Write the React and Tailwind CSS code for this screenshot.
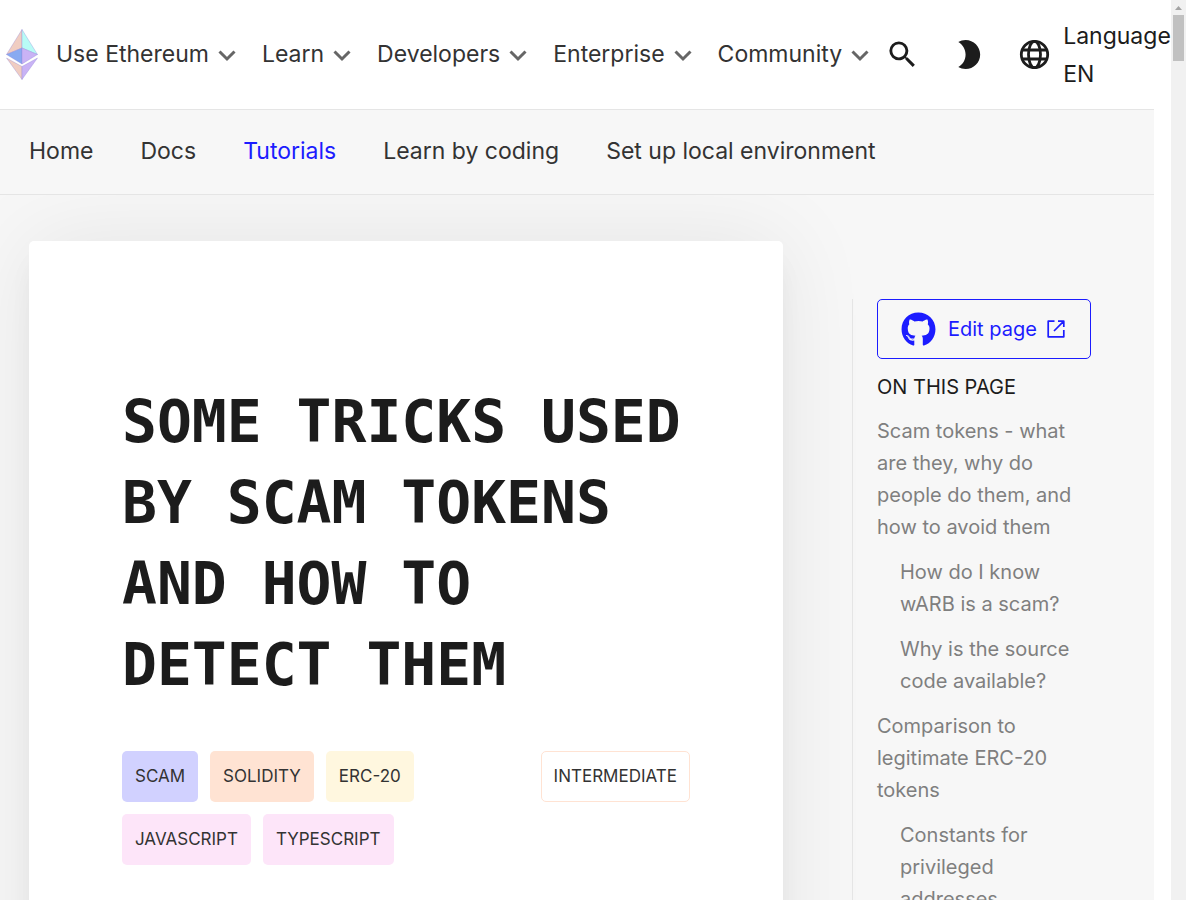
import React from "react";
import { MdSearch, MdBrightness2 } from "react-icons/md";
import { FaGithub } from "react-icons/fa";

const menus = ["Use Ethereum", "Learn", "Developers", "Enterprise", "Community"];

const sections = ["Home", "Docs", "Tutorials", "Learn by coding", "Set up local environment"];

const tags = [
  { name: "SCAM", color: "bg-[#d1d1ff]" },
  { name: "SOLIDITY", color: "bg-[#ffe3d3]" },
  { name: "ERC-20", color: "bg-[#fff7df]" },
  { name: "JAVASCRIPT", color: "bg-[#fde5f9]" },
  { name: "TYPESCRIPT", color: "bg-[#fde5f9]" },
];

const contents = [
  { title: "Scam tokens - what are they, why do people do them, and how to avoid them" },
  { title: "How do I know wARB is a scam?", nested: true },
  { title: "Why is the source code available?", nested: true },
  { title: "Comparison to legitimate ERC-20 tokens" },
  { title: "Constants for privileged addresses", nested: true },
];

function EthLogo() {
  return (
    <svg viewBox="0 0 32 52" className="h-[52px] w-8" aria-hidden="true">
      <g stroke="#8c7ed6" strokeOpacity="0.4" strokeWidth="0.8" strokeLinejoin="round">
        <path d="M16 0.5 0.5 25.5 16 19Z" fill="#f0cdc2" />
        <path d="M16 0.5 31.5 25.5 16 19Z" fill="#b8fbf6" />
        <path d="M0.5 25.5 16 19V35Z" fill="#88aaf1" />
        <path d="M31.5 25.5 16 19V35Z" fill="#c9b3f5" />
        <path d="M0.5 29 16 37.5V50.5Z" fill="#f0cdc2" />
        <path d="M31.5 29 16 37.5V50.5Z" fill="#c9b3f5" />
      </g>
    </svg>
  );
}

function Chevron() {
  return (
    <svg viewBox="0 0 34 34" className="ml-px h-[34px] w-[34px] text-[#666666]" fill="none" stroke="currentColor" strokeWidth="3" aria-hidden="true">
      <path d="M9.5 13.5 17 21 24.5 13.5" />
    </svg>
  );
}

function Globe() {
  return (
    <svg viewBox="0 0 35 35" className="h-[35px] w-[35px] shrink-0" fill="none" stroke="currentColor" strokeWidth="2.8" aria-hidden="true">
      <circle cx="17.5" cy="17.5" r="13.2" />
      <ellipse cx="17.5" cy="17.5" rx="6" ry="13.2" />
      <path d="M5.5 13h24M5.5 22h24" />
    </svg>
  );
}

function ExternalIcon() {
  return (
    <svg viewBox="0 0 18 18" className="h-[18px] w-[18px]" fill="none" stroke="currentColor" strokeWidth="1.7" strokeLinejoin="round" aria-hidden="true">
      <path d="M7.5 1.2H1.2v15.6h15.6V10M11 1.2h5.8V7M16.8 1.2 7 11" />
    </svg>
  );
}

function Header() {
  return (
    <header className="flex h-[109px] items-center bg-white pl-[6px] text-[#1c1c1c]">
      <a href="#home" aria-label="Ethereum home" className="shrink-0">
        <EthLogo />
      </a>
      <nav aria-label="Main" className="ml-[18px] flex items-center gap-[18px]">
        {menus.map((menu) => (
          <button key={menu} type="button" className="flex items-center whitespace-nowrap text-[#333333]">
            {menu}
            <Chevron />
          </button>
        ))}
      </nav>
      <button type="button" aria-label="Search" className="ml-2 shrink-0">
        <MdSearch className="h-[35px] w-[35px]" />
      </button>
      <button type="button" aria-label="Switch theme" className="ml-[31px] shrink-0">
        <MdBrightness2 className="h-[35px] w-[35px]" />
      </button>
      <button type="button" className="ml-[31px] flex shrink-0 items-center gap-[11px] text-left leading-[38px]">
        <Globe />
        <span className="w-[108px]">Language EN</span>
      </button>
    </header>
  );
}

export default function App() {
  return (
    <div className="flex h-screen overflow-hidden bg-white font-['Inter',sans-serif] text-[23px]">
      <div className="min-w-0 flex-1">
        <Header />
        <div className="mr-[17px] bg-[#f7f7f7]">
          <nav
            aria-label="Developers"
            className="flex h-[86px] items-center gap-[47px] border-y border-[#e5e5e5] pb-px pl-[29px]"
          >
            {sections.map((name) => (
              <a
                key={name}
                href="#section"
                className={name === "Tutorials" ? "whitespace-nowrap text-[#1c1cff]" : "whitespace-nowrap text-[#333333]"}
              >
                {name}
              </a>
            ))}
          </nav>
          <div className="flex overflow-hidden pl-[29px] pt-[46px]">
            <main className="min-h-[900px] min-w-0 flex-1 rounded-[5px] bg-white px-[93px] pt-[141px] shadow-[0_20px_25px_-5px_rgba(0,0,0,0.06),0_0_90px_rgba(0,0,0,0.08)]">
              <h1 className="font-['DejaVu_Sans_Mono',monospace] text-[58px] font-bold leading-[81px] text-[#1c1c1c]">
                SOME TRICKS USED BY SCAM TOKENS AND HOW TO DETECT THEM
              </h1>
              <div className="mt-[45px] flex items-start justify-between text-[17px] leading-[27px] text-[#333333]">
                <div className="flex w-[310px] flex-wrap gap-3">
                  {tags.map((tag) => (
                    <span key={tag.name} className={`rounded-[5px] px-[13px] py-3 ${tag.color}`}>
                      {tag.name}
                    </span>
                  ))}
                </div>
                <span className="rounded-[5px] border border-[#ffe3d3] px-3 py-[11px]">INTERMEDIATE</span>
              </div>
            </main>
            <aside className="ml-[69px] mt-[58px] w-[239px] shrink-0 border-l border-[#e5e5e5] pl-6 text-[20px] leading-8">
              <a
                href="#edit"
                className="flex h-[60px] items-center rounded-[5px] border border-[#1c1cff] pl-[23px] text-[#1c1cff]"
              >
                <FaGithub className="mr-3 h-[35px] w-[35px]" />
                Edit page
                <span className="ml-[10px]">
                  <ExternalIcon />
                </span>
              </a>
              <h2 className="mt-3 text-[#1c1c1c]">ON THIS PAGE</h2>
              <ul className="mt-3 flex flex-col gap-[13px] text-[#7f7f7f]">
                {contents.map((item) => (
                  <li key={item.title} className={item.nested ? "pl-[23px]" : ""}>
                    <a href="#content">{item.title}</a>
                  </li>
                ))}
              </ul>
            </aside>
            <div className="w-[63px] shrink-0" />
          </div>
        </div>
      </div>
      <div className="flex w-[15px] shrink-0 flex-col items-center bg-[#f1f1f1]" aria-hidden="true">
        <svg viewBox="0 0 15 15" className="h-[15px] w-[15px]">
          <path d="M4 10h7L7.5 6Z" fill="#a3a3a3" />
        </svg>
        <div className="h-[46px] w-[11px] bg-[#c1c1c1]" />
      </div>
    </div>
  );
}
